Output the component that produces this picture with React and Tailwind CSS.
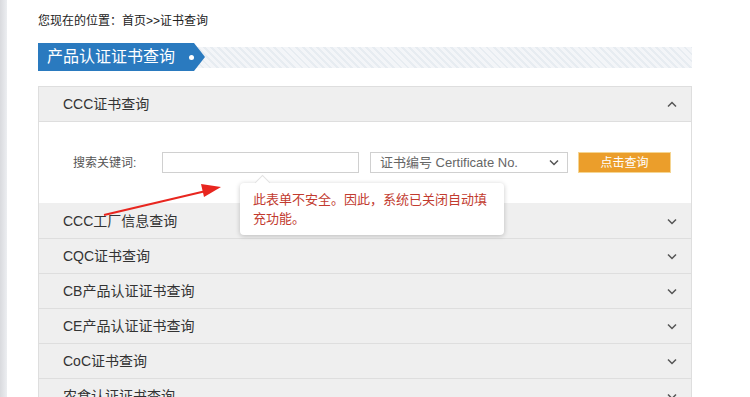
const FONT = "font-['Liberation_Sans','Noto_Sans_CJK_SC',sans-serif]";

const ROWS = [
  "CCC工厂信息查询",
  "CQC证书查询",
  "CB产品认证证书查询",
  "CE产品认证证书查询",
  "CoC证书查询",
  "农食认证证书查询",
];

function Chevron({ up = false }) {
  return (
    <svg width="10" height="7" viewBox="0 0 10 7" className="shrink-0">
      <polyline
        points={up ? "1,5.5 5,1.5 9,5.5" : "1,1.5 5,5.5 9,1.5"}
        fill="none"
        stroke="#555"
        strokeWidth="1.5"
      />
    </svg>
  );
}

function Row({ title, up = false, open = false }) {
  return (
    <div className="flex h-[35px] items-center justify-between border-b border-[#dedede] bg-[#efefef] pl-[24px] pr-[14px] text-[14px] text-[#333]">
      <span>{title}</span>
      <Chevron up={up} />
    </div>
  );
}

export default function App() {
  return (
    <div className={`relative flex h-[397px] w-[750px] overflow-hidden bg-white ${FONT}`}>
      <div className="w-[7px] shrink-0 bg-gradient-to-r from-[#d9dade] to-[#eceef1]" />
      <div className="w-[654px] shrink-0 pl-[31px]">
        <div className="w-[654px]">
          <div className="pt-[13px] text-[12px] leading-[16px] text-[#222]">
            您现在的位置：首页&gt;&gt;证书查询
          </div>

          <div className="mt-[14px] flex h-[28px] items-center">
            <div className="relative z-10 flex h-[28px] w-[167px] shrink-0 items-center bg-[#2a7abf] pl-[9px] pr-[11px] text-[16px] text-white [clip-path:polygon(0_0,calc(100%-11px)_0,100%_50%,calc(100%-11px)_100%,0_100%)]">
              <span>产品认证证书查询</span>
              <span className="ml-auto h-[5px] w-[5px] rounded-full bg-white" />
            </div>
            <div className="-ml-[10px] h-[21px] flex-1 bg-[repeating-linear-gradient(45deg,#e7ecf1_0,#e7ecf1_2px,#f3f5f8_2px,#f3f5f8_5px)]" />
          </div>

          <div className="mt-[15px] border-x border-t border-[#dedede]">
            <Row title="CCC证书查询" up />
            <div className="h-[82px] border-b border-[#efefef] bg-white pl-[34px] pt-[30px]">
              <div className="flex items-center">
                <div className="w-[89px] text-[12px] text-[#555]">搜索关键词:</div>
                <div className="h-[21px] w-[197px] border border-[#d0d0d0] bg-white" />
                <div className="ml-[11px] flex h-[21px] w-[198px] items-center justify-between border border-[#d0d0d0] bg-white pl-[9px] pr-[8px] text-[13px] text-[#666]">
                  <span>证书编号 Certificate No.</span>
                  <Chevron />
                </div>
                <button
                  type="button"
                  className="ml-[10px] h-[21px] w-[93px] border border-[#f5d592] bg-[#eb9e2b] text-[12px] text-white"
                >
                  点击查询
                </button>
              </div>
            </div>
            {ROWS.map((r) => (
              <Row key={r} title={r} />
            ))}
          </div>
        </div>
      </div>

      <svg
        className="pointer-events-none absolute left-0 top-0"
        width="750"
        height="397"
        viewBox="0 0 750 397"
      >
        <line x1="104" y1="215" x2="206" y2="191" stroke="#e8261f" strokeWidth="2.2" />
        <polygon points="221,187 201,184 204,197" fill="#e8261f" />
      </svg>

      <div className="absolute left-[240px] top-[183px] w-[264px] rounded-[4px] bg-white px-[13px] pb-[7px] pt-[7px] text-[13px] leading-[19px] text-[#c23b2f] shadow-[0_1px_5px_rgba(0,0,0,0.22)]">
        <div className="absolute -top-[6px] left-[17px] h-[11px] w-[11px] rotate-45 border-l border-t border-[#e2e2e2] bg-white" />
        <div className="relative">此表单不安全。因此，系统已关闭自动填充功能。</div>
      </div>
    </div>
  );
}
